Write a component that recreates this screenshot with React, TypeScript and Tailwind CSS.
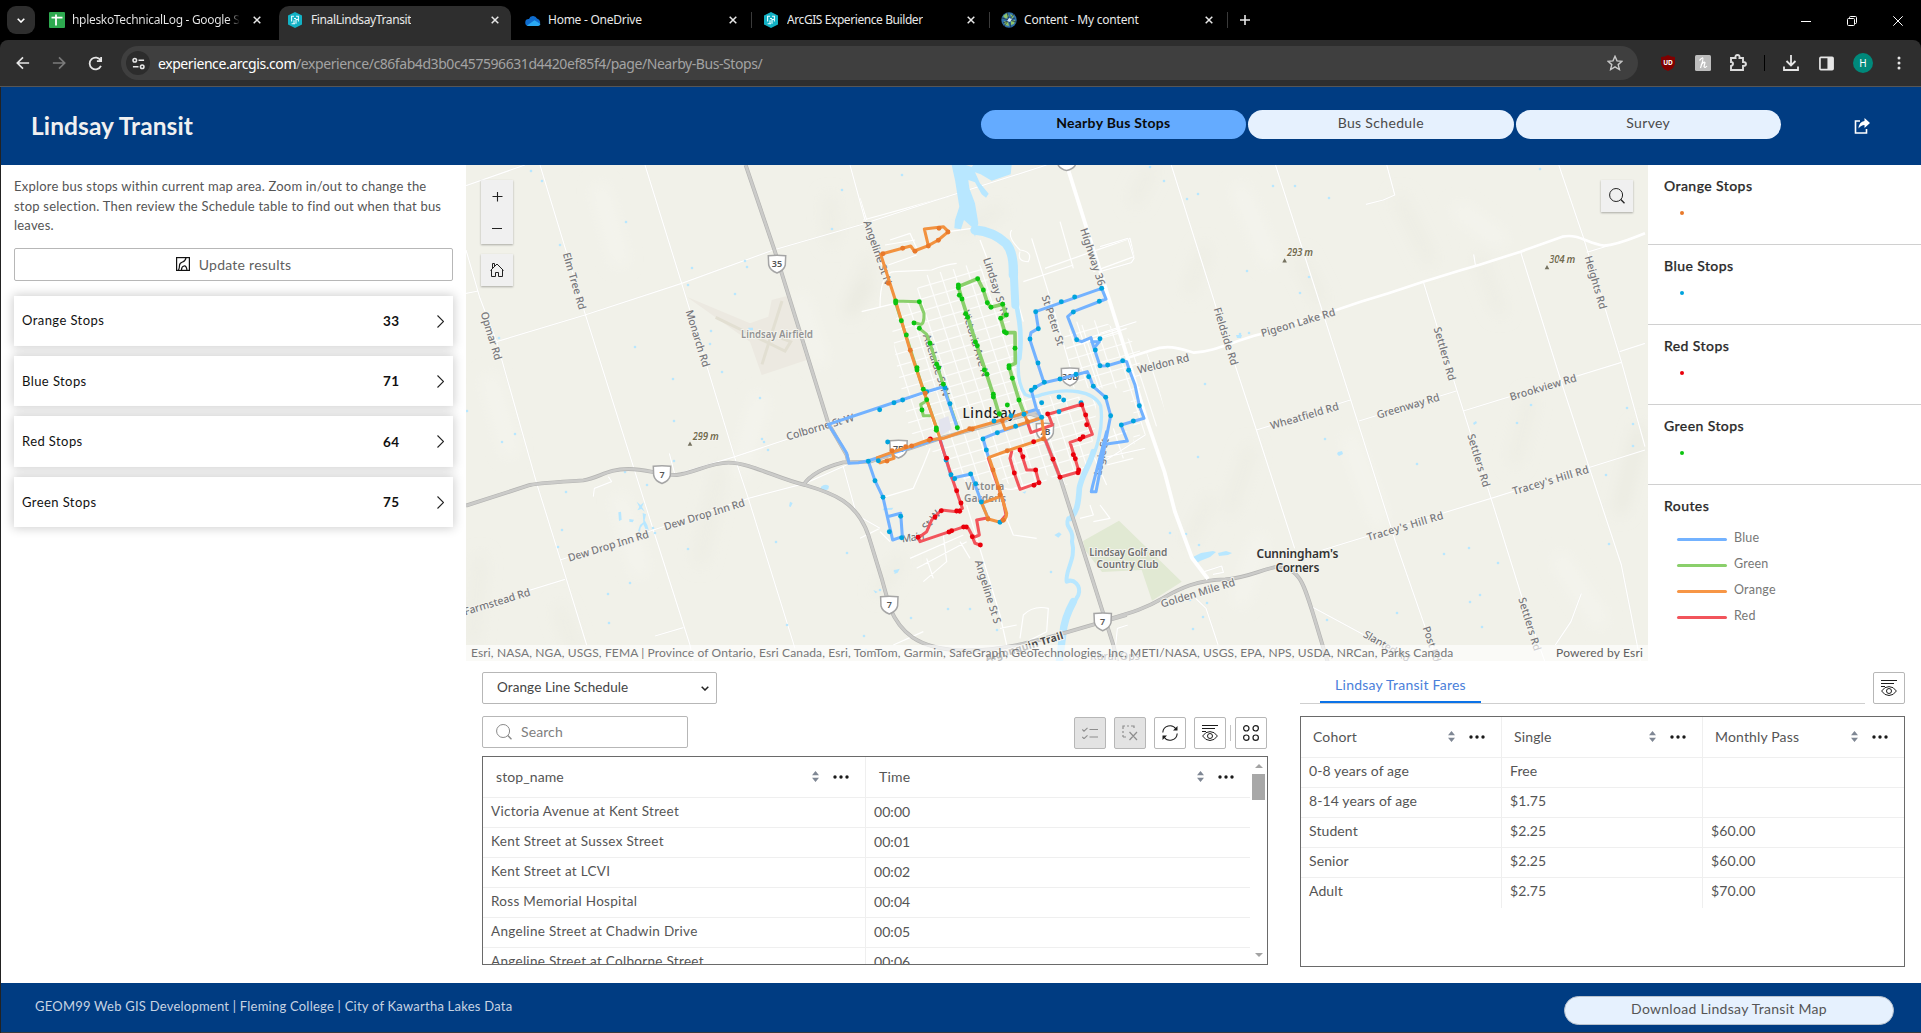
import React from "react";

/* ---------- map data ---------- */

type Label = { t: string; x: number; y: number; r?: number; l: number; s?: number; w?: number; c?: string; i?: boolean };

const ROAD_LABELS: Label[] = [
  { t: "Elm Tree Rd", x: 574.7, y: 281, r: 74, l: 59 },
  { t: "Opmar Rd", x: 491.5, y: 335.7, r: 73, l: 50 },
  { t: "Monarch Rd", x: 698, y: 338.3, r: 73, l: 59 },
  { t: "Colborne St W", x: 820, y: 426.7, r: -16.5, l: 70 },
  { t: "Dew Drop Inn Rd", x: 704.3, y: 514.3, r: -17, l: 84 },
  { t: "Dew Drop Inn Rd", x: 608.3, y: 545.7, r: -17, l: 84 },
  { t: "Farmstead Rd", x: 497, y: 601.5, r: -17, l: 69 },
  { t: "Fieldside Rd", x: 1226.2, y: 336.3, r: 73, l: 60 },
  { t: "Pigeon Lake Rd", x: 1298, y: 322.3, r: -16.5, l: 77 },
  { t: "Weldon Rd", x: 1163.3, y: 363.5, r: -14, l: 53 },
  { t: "Wheatfield Rd", x: 1304.4, y: 415.7, r: -16.5, l: 71 },
  { t: "Greenway Rd", x: 1408, y: 405.7, r: -16.5, l: 65 },
  { t: "Settlers Rd", x: 1445, y: 353.7, r: 74, l: 55 },
  { t: "Settlers Rd", x: 1479, y: 460.3, r: 73, l: 55 },
  { t: "Settlers Rd", x: 1530, y: 624, r: 73, l: 55 },
  { t: "Brookview Rd", x: 1543, y: 387, r: -16.5, l: 69 },
  { t: "Tracey's Hill Rd", x: 1405, y: 526, r: -16.5, l: 79 },
  { t: "Tracey's Hill Rd", x: 1550.5, y: 480, r: -16.5, l: 79 },
  { t: "Heights Rd", x: 1596, y: 282.3, r: 74, l: 55 },
  { t: "Golden Mile Rd", x: 1197.7, y: 592.7, r: -17, l: 77 },
  { t: "Slanted Rd", x: 1387, y: 646, r: 30, l: 52 },
  { t: "Post Rd", x: 1432, y: 644, r: 72, l: 37 },
  { t: "Angeline St N", x: 878, y: 252.3, r: 71, l: 67 },
  { t: "Highway 36", x: 1093, y: 256.7, r: 72, l: 60 },
  { t: "Lindsay St N", x: 996.3, y: 286.7, r: 72, l: 61 },
  { t: "St Peter St", x: 1053.3, y: 320.3, r: 72, l: 52 },
  { t: "Victoria Ave N", x: 976, y: 343.3, r: 73, l: 69 },
  { t: "Adelaide St N", x: 936.7, y: 365, r: 72, l: 65 },
  { t: "Angeline St S", x: 988.3, y: 591.7, r: 73, l: 66 },
  { t: "Main", x: 913, y: 537, r: -8, l: 23 },
  { t: "St W", x: 931, y: 520, r: -50, l: 22 },
  { t: "Logie St", x: 1101, y: 456.7, r: -78, l: 38 },
  { t: "Rural Ops", x: 1115, y: 656, l: 50 },
];

const PLACE_LABELS: Label[] = [
  { t: "Lindsay Airfield", x: 777, y: 334.3, l: 72, c: "#939393", w: 600, s: 9.8 },
  { t: "299 m", x: 705.7, y: 436.3, l: 26, c: "#726b4e", i: true, w: 600, s: 9.8 },
  { t: "293 m", x: 1300, y: 252.7, l: 26, c: "#726b4e", i: true, w: 600, s: 9.8 },
  { t: "304 m", x: 1562.3, y: 259.7, l: 26, c: "#726b4e", i: true, w: 600, s: 9.8 },
  { t: "Cunningham's", x: 1297.4, y: 553.7, l: 82, c: "#333333", w: 600, s: 12 },
  { t: "Corners", x: 1297.4, y: 567, l: 44, c: "#333333", w: 600, s: 12 },
  { t: "Lindsay", x: 989, y: 412.6, l: 53, c: "#222222", w: 500, s: 13.5 },
  { t: "Victoria", x: 984.7, y: 486, l: 39, c: "#8a8a8a", w: 600, s: 10.3 },
  { t: "Gardens", x: 985, y: 497.5, l: 42, c: "#8a8a8a", w: 600, s: 10.3 },
  { t: "Lindsay Golf and", x: 1128.3, y: 552, l: 78, c: "#707070", w: 600, s: 10 },
  { t: "Country Club", x: 1127.5, y: 563.7, l: 62, c: "#707070", w: 600, s: 10 },
  { t: "Algonquin Trail", x: 1024, y: 646.7, r: -17, l: 81, c: "#4a4a4a", w: 700, s: 10.5 },
];

const SHIELDS: [string, number, number][] = [
  ["35", 777, 264],
  ["7", 662, 474.5],
  ["7B", 898.5, 449],
  ["36B", 1070, 376.7],
  ["7B", 1045, 432],
  ["7", 889.3, 605],
  ["7", 1102.7, 621.7],
];

const WEST_ROADS =
  "M240 0L375 445L580 1095L690 1440L700 1490M18 255L60 400L110 530L230 955L300 1180L380 1440M555 0L665 355L825 880L865 1000L1005 1450M18 62L195 0M18 385L55 378M110 530L375 450L665 355L940 255L1200 180L1430 105L1760 0M1170 0L1215 165L1265 300M640 930L825 875L1110 780M300 1185L580 1095L865 1000L1035 955L1160 900M18 1335L315 1243M400 995L403 970L455 950L445 935M628 865L645 930M585 1413L670 1388M1150 905L1190 1050L1260 1090";
const EAST_ROADS =
  "M205 0L335 430L450 795L560 1150M505 0L720 700L850 1130L935 1385L970 1490M930 350L1025 670L1125 1000L1215 1300L1280 1490M1210 260L1330 660L1405 900L1500 1200L1555 1490M1320 0L1390 215L1500 590L1568 845M450 795L720 705M745 768L1025 678M1045 738L1500 592M1495 560L1568 535M640 1155L1125 1000L1568 855M825 0L848 90L815 105L765 118M600 1320L760 1410L850 1460M1385 1285L1355 1370L1310 1440M1400 262L1470 240M265 1290L305 1330L340 1440M0 245L80 220L98 280L90 293L0 320M0 505L105 470M0 880L130 850M10 890L130 810M300 1220L350 1203L355 1222L325 1228M1075 268L1080 300M45 1440L50 1390L80 1380";
const TOWN_STREETS =
  "M10 165L265 95M0 100L20 165M90 225L150 205L170 250M75 240L165 225M85 300L170 270M265 200L335 190M360 225L385 290M60 425Q60 320 105 320L215 315Q250 300 290 295M5 440L105 415M455 195Q440 215 480 255Q520 260 505 290Q470 290 480 260M515 220L580 430L640 640M555 310L810 220L822 275L700 320M600 170L640 310M490 350L640 300M620 550L800 490M650 470L720 680M680 520L780 490M60 1000L160 970L190 900L210 850M90 1130L60 1100M420 960Q440 980 470 970L560 945M320 1020L420 1350L440 1440M0 1120L60 1090M190 1250L260 1190L250 1110M150 1180L310 1110M170 1210L320 1130M220 1240L200 1180M440 1060L460 1110L530 1120M420 1390L470 1380M480 1420L490 1350Q520 1320 565 1330L560 1400L500 1430M690 1020L700 1050L660 1060M720 1020L750 1060L700 1070M100 1440L190 1400M710 830L800 800M740 900L820 880M760 790L790 880M700 870L740 960M300 1130L330 1180M470 400L490 470";

const townGrid = (() => {
  let d = "";
  for (let i = 0; i < 19; i++) {
    const x = -60 + i * 42;
    d += `M${x} 300L${x + 225} 1000`;
  }
  for (let j = 0; j < 24; j++) {
    const y = 420 + j * 36;
    d += `M0 ${y}L760 ${y - 222}`;
  }
  return d;
})();

const BLUE =
  "M250 665L200 680L125 705L-95 778L-55 840L-40 865L-33 895L-5 893L25 887L240 820M25 889L45 947L69 997L82 1055L122 1045L127 1115L98 1125L82 1055M250 665L293 792M240 822L275 940L333 927L364 1010L385 1062M385 875L379 855L369 820L412 803L545 760M530 735L515 680L525 667L552 653L509 522L513 503L535 490L527 440L725 370L738 402L640 440L623 455L650 525L665 530L693 518L697 533L720 603L742 602L790 588L800 590L808 615L825 660L838 722L852 760L783 780L802 828L735 838M695 530L718 530L706 545M552 653L600 642L682 620L690 638L700 665L737 697L752 752L735 838L708 980L694 980L698 962L740 800M425 765L530 733L545 760";
const GREEN_THIN =
  "M105 408L178 410L192 445Q193 480 180 478L160 472M178 490L200 508L210 535L250 660L268 715L293 788M105 408L190 675L232 795M200 708L182 718L190 752L210 752";
const GREEN =
  "M418 750L400 690L380 628L350 540L305 400L295 365L353 341L370 375L382 413L393 427L428 418L438 450L422 460L435 503L465 503L466 595L447 603L457 640L477 705L492 745";
const RED =
  "M240 825L275 935L307 1030L290 1040L244 1035L215 1065L200 1100L175 1118L180 1130L313 1085L325 1090L340 1118L358 1110L350 1065L385 1058M337 1115L345 1135L360 1140M455 860L450 880L462 922L480 973L537 953L527 915L500 915L480 853M500 765L513 803L577 780L565 748L665 718L683 770L697 808L665 820L630 832L642 870L657 920L600 937L555 822M385 880L430 1010L438 1050L420 1072";
const ORANGE =
  "M265 200L250 185L193 192L205 242L235 225L265 200M205 242L163 258L152 243L62 268L106 405L150 555L190 675L240 820M52 878L95 862L155 843L205 825L250 820L330 792L425 765L500 742M492 748L503 770M425 765L435 793L545 758L553 820L440 858L387 877L400 915L417 968L428 1005L440 1045Q440 1065 420 1072L385 1062L365 1015L420 995M52 878L60 893L102 880L97 862";

const STOPS: [string, string][] = [
  ["#00a3dd", "200,680 128,705 102,713 59,734 255,668 270,716 25,889 45,947 69,997 88,1100 122,1054 125,1118 258,885 273,929 284,941 332,927 347,956 364,1011 83,831 55,887 402,768 412,803 453,752 492,748 467,784 369,822 379,855 545,757 545,713 597,740 597,696 611,705 663,713 514,676 525,667 553,652 600,642 648,628 686,635 700,664 737,697 752,752 510,522 535,491 527,440 604,410 644,396 725,370 718,409 640,441 650,524 720,521 706,555 720,602 743,600 788,587 806,616 838,722 820,768 784,780 534,594 420,1072"],
  ["#0bc40f", "107,408 107,414 178,410 162,474 178,490 124,467 139,510 210,535 171,608 171,615 230,598 236,608 190,673 200,704 186,735 250,658 229,789 229,796 292,788 295,360 295,368 298,391 306,402 353,341 370,375 382,413 393,427 428,418 439,450 422,460 433,500 439,504 465,550 447,602 447,609 457,640 477,705 442,720 317,446 323,457 346,531 352,542 373,615 381,628 400,688 400,696 418,746"],
  ["#e9000b", "211,822 260,880 290,977 303,1014 290,1038 299,1039 244,1037 225,1056 174,1117 267,1101 275,1097 311,1086 319,1086 337,1115 361,1140 480,855 489,875 463,924 527,915 537,953 522,961 521,830 563,747 665,719 677,750 680,779 660,823 669,815 640,869 646,881 656,915 654,923 600,937 579,883"],
  ["#e8792b", "264,201 237,190 235,226 205,243 165,259 128,250 69,266 85,355 151,556 196,685 208,826 155,843 137,845 96,857 81,888 329,791 337,792 427,767 442,857 550,821 503,770 399,915 416,968 420,989 384,1062 430,1066"],
];

const PONDS =
  "467,411 502,442 515,434 499,338 531,171 542,181 560,245 626,222 692,268 688,285 711,331 710,344 722,372 735,294 745,261 747,267 842,190 832,229 673,379 674,421 635,347 625,472 647,485 566,492 760,398 768,450 762,439 764,442 674,461 630,583 608,594 558,547 562,530 688,549 776,542 847,553 787,625 609,623 866,650 655,533 653,528 1187,199 1164,181 1198,194 1240,334 1247,271 1273,186 1295,186 1300,293 1309,277 1329,198 1205,384 1249,333 1198,457 1325,439 1417,464 1517,423 1531,405 1627,408 1633,424 1633,446 1606,475 1609,544 1469,548 1444,554 1498,563 1480,595 1470,602 1482,627 1397,613 1327,620 1170,533 1186,534 1199,545 1207,603 1193,629 1540,169 1150,167 1190,600 1203,617 895,571 880,590 911,618 948,609 970,609 864,636 902,175 997,630 1051,572";

const Dots = ({ color, pts, r }: { color: string; pts: string; r: number }) => (
  <g fill={color}>
    {pts.split(" ").map((p, i) => {
      const [x, y] = p.split(",").map(Number);
      return <circle key={i} cx={x} cy={y} r={r} />;
    })}
  </g>
);

const MapLabel = ({ t, x, y, r = 0, l, s = 10.6, w = 500, c = "#77777b", i }: Label) => (
  <text
    x={x}
    y={y}
    transform={`rotate(${r} ${x} ${y})`}
    textAnchor="middle"
    dominantBaseline="central"
    textLength={l}
    fontSize={s}
    fontWeight={w}
    fontStyle={i ? "italic" : "normal"}
    fill={c}
    stroke="#f4f4ee"
    strokeWidth={2}
    strokeLinejoin="round"
    paintOrder="stroke"
  >
    {t}
  </text>
);

function CityMap() {
  return (
    <svg
      viewBox="466 165 1182 496"
      className="block h-[496px] w-[1182px] bg-[#f1f1e9]"
      fontFamily='"Noto Sans", sans-serif'
    >
      <defs>
        <filter id="soft" x="-50%" y="-50%" width="200%" height="200%">
          <feGaussianBlur stdDeviation="8" />
        </filter>
        <clipPath id="town">
          <path d="M95 480L200 330L290 310L355 290L455 480L475 640L500 700L600 690L710 700L705 800L680 900L620 960L560 930L480 980L420 940L330 960L240 880L150 800L110 600Z" />
        </clipPath>
        <clipPath id="east">
          <path d="M530 500L640 460L780 560L810 640L840 760L740 840L740 720L700 670L560 670Z" />
        </clipPath>
      </defs>

      {/* terrain shading */}
      <g filter="url(#soft)" fill="none" strokeLinecap="round">
        <g stroke="#ecece3" strokeWidth="11">
          <path d="M870 260L850 310M830 200L832 240M1150 170L1135 200M1205 250L1190 290M1480 260L1500 310M1530 400L1515 460M1250 450L1230 510M1210 500L1190 540M720 470L700 560M480 560L472 640M560 610L575 650M900 560L880 590M1000 210L960 230M1320 300L1300 260M1400 200L1430 260" />
        </g>
        <g stroke="#e7e7dd" strokeWidth="9">
          <path d="M1640 430L1620 510M868 285L850 312" />
        </g>
        <g stroke="#f5f5ef" strokeWidth="12">
          <path d="M600 190L620 260M760 400L740 470M490 380L510 450M1240 190L1270 260M1460 210L1500 240M1350 440L1380 520M1560 560L1600 620M1260 540L1240 600M800 300L820 360M620 500L640 570" />
        </g>
      </g>

      <g transform="translate(460 165) scale(.33333)">
        <path d="M680 395L870 475L925 455L935 405L980 393L1040 585L905 630L870 530Z" fill="#ece9e1" />
        <path d="M767 457L975 558L992 530L965 520M966 408L906 598" fill="none" stroke="#e2dfd2" strokeWidth="9" />
        <g fill="#b8e7ff">
          <path d="M530 1010l12 10 10-8-6 14 8 14-10-8-12 4 6-10zM475 1042l8-2 2 24-8 4zM548 1044l10 4-4 18 8 14 4 14-8 2-8-18-8 10-2 14-6-4 6-18 10-8z" />
          <path d="M508 1062l14 2-4 8-10-2zM1083 965q12-10 24-2l-2 10q-14 6-24 0zM990 1010l8 4-6 12-5-2zM865 488h14v8h-14z" />
        </g>
      </g>
      <path d="M1083 541L1119 520.7L1181.7 581.7L1152 600.7L1141.7 570L1102 572L1085 550Z" fill="#e1e9d3" />

      {/* local streets */}
      <g fill="none" stroke="#ffffff" strokeLinejoin="round">
        <g transform="translate(860 165) scale(.33333)" strokeWidth="3.6">
          <path d={TOWN_STREETS} />
          <path d={townGrid} clipPath="url(#town)" opacity=".85" />
          <path d={townGrid} transform="translate(80 0)" clipPath="url(#east)" opacity=".85" />
          <path d="M235 765l30-12 10 40-35 20z" fill="#e3e4ee" stroke="none" />
        </g>
        <g transform="translate(460 165) scale(.33333)">
          <path d={WEST_ROADS} strokeWidth="5" stroke="#ebebe4" />
          <path d={WEST_ROADS} strokeWidth="3.6" />
        </g>
        <g transform="translate(1100 165) scale(.34758 .33333)">
          <path d={EAST_ROADS} strokeWidth="5" stroke="#ebebe4" />
          <path d={EAST_ROADS} strokeWidth="3.6" />
        </g>
      </g>

      {/* water */}
      <g transform="translate(860 165) scale(.33333)" fill="#b8e7ff">
        <path d="M275 0L285 45L298 125L285 165L283 190L303 193L312 165L335 185L345 215L355 175L345 115L328 70L325 45L345 52L365 88L378 98L386 86L360 55L345 22L362 28L395 47L452 28L455 0L340 0L335 6L318 0Z" />
        <g fill="none" stroke="#b8e7ff" strokeLinecap="round" strokeLinejoin="round">
          <path d="M345 195Q400 200 438 235Q462 262 460 330" strokeWidth="28" />
          <path d="M460 300L466 420" strokeWidth="24" />
          <path d="M466 400L478 470C485 520 482 550 478 580" strokeWidth="14" />
          <path d="M478 560C470 620 475 660 495 688Q520 702 548 688C620 668 700 676 722 722C732 790 708 860 690 890" strokeWidth="10" />
          <path d="M700 860C690 900 665 930 658 970C655 1020 650 1040 632 1060" strokeWidth="17" />
          <path d="M625 1060C612 1090 645 1090 636 1130C650 1180 615 1215 620 1250C640 1240 665 1260 655 1290Q610 1370 612 1410" strokeWidth="12" />
          <path d="M640 1310Q612 1360 608 1410L598 1490" strokeWidth="22" />
        </g>
        <path d="M583 1110l14-8 8 6-10 10zM105 1215l14-4-6 12-10 4zM40 1275l14 6-8 4zM70 1030l30-2-4 6-28 2zM487 982l12-4-4 8z" />
      </g>
      <path d="M1193 557l8-4 12-2 3 1-6 5-10 4-3 2zM1218 553l8-2 6 2-4 2-9 1zM1236 335l6 0-1 3-4 0z" fill="#b8e7ff" />
      <Dots color="#b8e7ff" pts={PONDS} r={1.3} />
      <path d="M1338 452l4-1 1 3-4 2-2-2zM1473 423l3-2 1 2-3 2z" fill="#b8e7ff" />

      {/* highways */}
      <g fill="none" strokeLinecap="butt">
        {[
          ["#b4b4b2", 3.9],
          ["#cbcbc9", 2.6],
        ].map(([c, w]) => (
          <g key={c} stroke={c as string}>
            <g transform="translate(460 165) scale(.33333)" strokeWidth={(w as number) * 3}>
              <path d="M857 0L945 260L1105 775L1160 870L1165 892M18 1022L210 960Q235 954 370 946C420 938 440 912 505 912C560 912 600 930 650 930C700 925 750 893 805 893C870 893 950 940 1035 960C1120 985 1190 1010 1225 1110L1265 1240L1290 1330C1320 1400 1370 1450 1500 1456" />
              <path d="M1030 960Q1060 915 1150 892L1230 890L1440 820M1440 820L1740 738" />
              <path d="M1500 1456C1640 1460 1760 1420 1930 1370L2000 1350" />
            </g>
            <g transform="translate(860 165) scale(.33333)" strokeWidth={(w as number) * 3}>
              <path d="M555 822L600 937L760 1440L772 1490M500 742L545 758" />
            </g>
            <g transform="translate(1100 165) scale(.34758 .33333)" strokeWidth={(w as number) * 2.9}>
              <path d="M20 1364C100 1340 130 1330 180 1300C230 1270 280 1245 360 1243C420 1240 460 1215 510 1205C590 1215 585 1260 655 1490" />
            </g>
          </g>
        ))}
      </g>
      <g fill="none" stroke="#ffffff">
        <path d="M1066.7 165L1128.3 360L1146 418L1164.5 472L1175 512L1192 558L1208 579" strokeWidth="3.8" />
        <g transform="translate(1100 165) scale(.34758 .33333)" strokeWidth="8">
          <path d="M75 580L150 555C200 535 240 555 270 563C330 560 380 530 460 508L680 435L750 410L830 385L930 350L1040 315L1090 300L1210 260L1330 215C1380 205 1400 235 1450 242C1490 240 1530 220 1568 205" />
        </g>
      </g>

      {ROAD_LABELS.map((l, i) => (
        <MapLabel key={i} {...l} />
      ))}
      {PLACE_LABELS.map((l, i) => (
        <MapLabel key={i} {...l} />
      ))}
      <path d="M690 441.5l2.3 4.2h-4.6zM1284.6 258.3l2.3 4.2h-4.6zM1547 265l2.3 4.2h-4.6z" fill="#75715f" />

      <path d="M1058 165Q1061 169.500 1066.700 170.500Q1072.500 169.500 1075.500 165" fill="#fff" stroke="#a5a5a5" strokeWidth="1.5" />
      {SHIELDS.map(([t, x, y], i) => (
        <g key={i} transform={`translate(${x} ${y})`}>
          <path d="M-8.7 -8.3Q0 -9 8.7 -8.3L8.3 1Q7 6.5 0 9Q-7 6.5 -8.3 1Z" fill="#fff" stroke="#a5a5a5" strokeWidth="1.5" />
          <text textAnchor="middle" y="3.4" fontSize="9" fontWeight="600" fill="#555">
            {t}
          </text>
        </g>
      ))}

      {/* bus routes and stops */}
      <g transform="translate(860 165) scale(.33333)">
        <g fill="none" strokeLinejoin="round" strokeLinecap="round" strokeWidth="9.2">
          <path d={GREEN_THIN} stroke="#8acf6b" />
          <path d={GREEN} stroke="#8acf6b" strokeWidth="11" />
          <path d={BLUE} stroke="#73b2ff" />
          <path d={RED} stroke="#f2545b" />
          <path d={ORANGE} stroke="#f2923f" />
        </g>
        {STOPS.map(([c, p]) => (
          <Dots key={c} color={c} pts={p} r={7.4} />
        ))}
      </g>
    </svg>
  );
}

/* ---------- small icons ---------- */

const Close = () => (
  <svg viewBox="0 0 8 8" className="size-2 shrink-0" stroke="#e8e8e8" strokeWidth="1.5">
    <path d="M.7.7l6.6 6.6M7.3.7L.7 7.3" />
  </svg>
);

const HexIcon = () => (
  <svg viewBox="0 0 14 16" className="h-4 w-3.5 shrink-0">
    <path d="M7 0l7 3.6v8.8L7 16l-7-3.6V3.6z" fill="#12b1c4" />
    <path d="M6 4.2H3.6v5.4M3.6 11.8H6V8.2M8 4.2h2.4v5.4M8 11.8V7.5h2.4M6 6.5h2M6 11.8h1" fill="none" stroke="#e6fbff" strokeWidth="1.1" />
  </svg>
);

const SheetsIcon = () => (
  <svg viewBox="0 0 16 16" className="size-4 shrink-0">
    <rect width="16" height="16" rx="1" fill="#2da94f" />
    <path d="M7 2.5v11M2.5 5.7h11" stroke="#fff" strokeWidth="1.8" />
  </svg>
);

const CloudIcon = () => (
  <svg viewBox="0 0 16 11" className="h-[11px] w-4 shrink-0">
    <path d="M4 4a4.3 4.3 0 0 1 8-.5A4 4 0 0 1 13 11H3.500A3.500 3.500 0 0 1 4 4z" fill="#0f6cce" />
    <path d="M2 10.400L9.500 5.200 15.500 9A3 3 0 0 1 13 11H3.500a3 3 0 0 1-1.500-.6z" fill="#2aa8f2" />
  </svg>
);

const GlobeIcon = () => (
  <svg viewBox="0 0 16 16" className="size-4 shrink-0">
    <circle cx="8" cy="8" r="7.700" fill="#2f6fa8" />
    <path d="M2 4l4-3 2 3-3 3zM9 2l4 2-2 3zM3 9l4 1 1 4-4-1zM10 9l4-1-1 4-3 1z" fill="#8fc46a" />
    <path d="M1 6l14 4M6 .5l4 15M13 2L3 14M2 11L14 6" stroke="#1d2a33" strokeWidth=".7" fill="none" />
    <path d="M8 6l3 1-2 3-3-1z" fill="#cfe7f7" />
  </svg>
);

const SearchIcon = ({ className }: { className: string }) => (
  <svg viewBox="0 0 16 16" className={className} fill="none" stroke="currentColor">
    <circle cx="7.100" cy="7" r="6.500" />
    <path d="M11.800 11.500l3.700 3.800" strokeWidth="1.300" />
  </svg>
);

const EyeList = ({ className }: { className: string }) => (
  <svg viewBox="0 0 16 16" className={className} fill="none" stroke="#1c1c1c">
    <path d="M0 .5h16M0 3.500h13M0 6.500h4" />
    <path d="M.6 11Q3.500 6.600 8 6.600T15.400 11Q12.500 15.500 8 15.500T.6 11z" />
    <circle cx="8" cy="11" r="2.500" />
  </svg>
);

const HeaderIcons = () => (
  <div className="ml-auto flex items-center gap-[14px]">
    <svg viewBox="0 0 7 11" className="h-[11px] w-[7px]" fill="#7f8794">
      <path d="M3.500 0L7 4.300H0zM3.500 11L7 6.700H0z" />
    </svg>
    <svg viewBox="0 0 16 4" className="mt-0.5 h-1 w-4" fill="#1a1a1a">
      <circle cx="2" cy="2" r="1.700" />
      <circle cx="8" cy="2" r="1.700" />
      <circle cx="14" cy="2" r="1.700" />
    </svg>
  </div>
);

/* ---------- browser frame ---------- */

const Tab = ({ icon, title, width, titleClass }: { icon: React.ReactNode; title: string; width: string; titleClass: string }) => (
  <div className={`flex h-7 shrink-0 items-center ${width}`}>
    <div className="flex w-6 shrink-0 items-center">{icon}</div>
    <span className={`-ml-px overflow-hidden whitespace-nowrap ${titleClass}`}>{title}</span>
    <div className="ml-auto">
      <Close />
    </div>
  </div>
);

function BrowserChrome() {
  return (
    <div className="font-['Noto_Sans',sans-serif]">
      <div className="flex h-10 bg-black pt-[6px] text-[12px] text-[#e9e9e9]">
        <div className="ml-[7px] flex h-7 w-7 shrink-0 items-center justify-center rounded-[9px] bg-[#2e2e2e]">
          <svg viewBox="0 0 8 5" className="h-[5px] w-2" fill="none" stroke="#fff" strokeWidth="1.600">
            <path d="M.7.7L4 4 7.300.7" />
          </svg>
        </div>
        <div className="w-[14px] shrink-0" />
        <Tab icon={<SheetsIcon />} title="hpleskoTechnicalLog - Google Sheets" width="mr-[18px] w-[212px]" titleClass="w-[168px] tracking-[-0.32px] bg-gradient-to-r from-[#e9e9e9] from-93% to-transparent bg-clip-text text-transparent" />
        <div className="flex h-[34px] w-[232px] shrink-0 items-start rounded-t-[10px] bg-[#2e2e2e] pr-3 pl-[9px]">
          <Tab icon={<HexIcon />} title="FinalLindsayTransit" width="w-full" titleClass="tracking-[-0.38px]" />
        </div>
        <Tab icon={<CloudIcon />} title="Home - OneDrive" width="ml-[14px] w-[212px]" titleClass="tracking-[-0.25px]" />
        <div className="mt-[6px] ml-[14px] h-4 w-px bg-[#3a3a3a]" />
        <Tab icon={<HexIcon />} title="ArcGIS Experience Builder" width="ml-3 w-[211px]" titleClass="tracking-[-0.42px]" />
        <div className="mt-[6px] ml-[14px] h-4 w-px bg-[#3a3a3a]" />
        <Tab icon={<GlobeIcon />} title="Content - My content" width="ml-[11px] w-[212px]" titleClass="tracking-[-0.2px]" />
        <div className="mt-[6px] ml-[14px] h-4 w-px bg-[#3a3a3a]" />
        <svg viewBox="0 0 10 10" className="mt-[9px] ml-3 size-[10px]" stroke="#e8e8e8" strokeWidth="1.600">
          <path d="M5 0v10M0 5h10" />
        </svg>
        <div className="mt-[9px] mr-[18px] ml-auto flex h-[11px] items-center gap-[36px]">
          <svg viewBox="0 0 10 10" className="size-[10px]" stroke="#fff">
            <path d="M0 5.500h10" />
          </svg>
          <svg viewBox="0 0 10 10" className="size-[10px]" stroke="#fff" fill="none">
            <rect x=".5" y="2.500" width="7" height="7" rx="1" />
            <path d="M2.500 2.500V1.500q0-1 1-1h5q1 0 1 1v5q0 1-1 1h-1" />
          </svg>
          <svg viewBox="0 0 10 10" className="size-[10px]" stroke="#fff">
            <path d="M.3.3l9.400 9.400M9.700.3L.3 9.700" />
          </svg>
        </div>
      </div>

      <div className="flex h-[46px] items-center rounded-t-lg bg-[#2e2e2e] shadow-[0_-8px_0_0_#000]">
        <svg viewBox="0 0 16 16" className="ml-4 size-[14px]" fill="none" stroke="#e6e6e6" strokeWidth="1.900">
          <path d="M15 8H2M8 1.500L1.500 8 8 14.500" />
        </svg>
        <svg viewBox="0 0 16 16" className="ml-[22px] size-[14px]" fill="none" stroke="#7b7b7b" strokeWidth="1.900">
          <path d="M1 8h13M8 1.500L14.500 8 8 14.500" />
        </svg>
        <svg viewBox="0 0 16 16" className="ml-[22px] size-[15px]" fill="none" stroke="#e6e6e6" strokeWidth="1.900">
          <path d="M13.800 10.500A6.300 6.300 0 1 1 13.500 4.800M14 1v4.500H9.500" />
        </svg>
        <div className="ml-[18px] flex h-[34px] w-[1517px] items-center rounded-full bg-[#3f3f3f] pl-[5px] text-[14px]">
          <div className="flex size-6 shrink-0 items-center justify-center rounded-full bg-[#2c2c2c]">
            <svg viewBox="0 0 14 14" className="size-[13px]" fill="none" stroke="#e6e6e6" strokeWidth="1.700">
              <circle cx="3" cy="3.500" r="1.900" />
              <path d="M7 3.500h6M1 10.500h6" />
              <circle cx="11" cy="10.500" r="1.900" />
            </svg>
          </div>
          <span className="ml-2 text-white tracking-[-0.42px]">experience.arcgis.com</span>
          <span className="text-[#a3a3a3] tracking-[-0.43px]">/experience/c86fab4d3b0c457596631d4420ef85f4/page/Nearby-Bus-Stops/</span>
          <svg viewBox="0 0 16 16" className="mr-[15px] ml-auto size-4" fill="none" stroke="#c9c9c9" strokeWidth="1.400">
            <path d="M8 1.300l2 4.600 5 .4-3.800 3.300 1.200 4.900L8 11.900l-4.400 2.600 1.200-4.900L1 6.300l5-.4z" />
          </svg>
        </div>
        <div className="ml-auto flex items-center pr-[20px]">
          <svg viewBox="0 0 16 16" className="size-4">
            <path d="M8 0q3 2 7 2v6q0 5-7 8Q1 13 1 8V2q4 0 7-2z" fill="#800000" />
            <text x="8" y="9.500" textAnchor="middle" fontSize="6.500" fontWeight="700" fill="#fff">
              UD
            </text>
          </svg>
          <svg viewBox="0 0 16 16" className="mr-px ml-[19px] size-4">
            <rect width="16" height="16" rx="1.500" fill="#bdbdbd" />
            <path d="M4.500 5.500Q7 2.500 7.800 3T5.500 13M6 10Q9 6 10 7.500L9 11.500q1 2 3-.5" fill="none" stroke="#fff" strokeWidth="1.200" />
          </svg>
          <svg viewBox="0 0 18 18" className="ml-[17px] size-[18px]" fill="none" stroke="#dcdcdc" strokeWidth="1.900">
            <path d="M2 4h4.500q-.5-3 2-3t2 3H14v4q3 0 3 2t-3 2v4H2v-4q2-.4 2-2.200T2 8z" />
          </svg>
          <div className="ml-[17px] h-4 w-[1.5px] bg-black" />
          <svg viewBox="0 0 16 16" className="ml-[18px] size-4" fill="none" stroke="#e6e6e6" strokeWidth="1.800">
            <path d="M8 0v10M3.500 6L8 10.500 12.500 6M1 11.500V15h14v-3.500" />
          </svg>
          <svg viewBox="0 0 16 16" className="ml-[20px] size-[15px]">
            <rect x="1" y="1.500" width="14" height="13" rx="1" fill="none" stroke="#e6e6e6" strokeWidth="1.800" />
            <path d="M9 2h6v12H9z" fill="#e6e6e6" />
          </svg>
          <div className="ml-[19px] flex size-5 items-center justify-center rounded-full bg-[#00897b] text-[10px] text-white">H</div>
          <svg viewBox="0 0 4 14" className="ml-[24px] h-[14px] w-1" fill="#e6e6e6">
            <circle cx="2" cy="2" r="1.500" />
            <circle cx="2" cy="7" r="1.500" />
            <circle cx="2" cy="12" r="1.500" />
          </svg>
        </div>
      </div>
      <div className="h-px bg-[#565656]" />
    </div>
  );
}

/* ---------- application ---------- */

const NAV = [
  { name: "Nearby Bus Stops", style: "bg-[#64abff] font-bold text-[#0a0a0a] tracking-[0.28px]" },
  { name: "Bus Schedule", style: "bg-[#e6f1fe] text-[#4a4a4a] tracking-[0.34px]" },
  { name: "Survey", style: "bg-[#e6f1fe] text-[#4a4a4a] tracking-[0.34px]" },
];

function Header() {
  return (
    <header className="flex h-[78px] bg-[#003c82]">
      <h1 className="mt-[22.5px] ml-[30px] text-[24.5px] leading-8 font-bold text-[#f0f0f0] tracking-[0.09px]">Lindsay Transit</h1>
      <nav className="mt-[23px] mr-[73px] ml-auto flex gap-[2px] text-[14px]">
        {NAV.map((n) => (
          <button key={n.name} className={`flex h-[29px] w-[265.5px] justify-center rounded-full pt-[3px] leading-5 ${n.style}`}>
            {n.name}
          </button>
        ))}
      </nav>
      <svg viewBox="0 0 16 16" className="mt-[31px] mr-[51px] size-4" fill="none" stroke="#fff" strokeWidth="1.600">
        <path d="M6 3H1.500v12h11v-4" />
        <path d="M10.500 0l5.500 5-5.500 5V7Q7 7 4.500 10.500 5 3.800 10.500 3z" fill="#fff" stroke="none" />
      </svg>
    </header>
  );
}

const CARDS: [string, number][] = [
  ["Orange Stops", 33],
  ["Blue Stops", 71],
  ["Red Stops", 64],
  ["Green Stops", 75],
];

function StopPanel() {
  return (
    <aside className="w-[465px] shrink-0 bg-white pr-[13px] pl-[13px]">
      <p className="mt-3 text-[13px] leading-[19.5px] whitespace-nowrap text-[#555] tracking-[0.21px]">
        Explore bus stops within current map area. Zoom in/out to change the
        <br />
        stop selection. Then review the Schedule table to find out when that bus
        <br />
        leaves.
      </p>
      <button className="mt-[12.5px] flex h-[33px] w-[439px] items-center justify-center gap-[9px] rounded-[2px] border border-[#b7b7b7] pb-px text-[14px] text-[#606060] tracking-[0.25px]">
        <svg viewBox="0 0 14 14" className="size-[14px]" fill="none" stroke="#111" strokeWidth="1.200">
          <rect x=".6" y=".6" width="12.800" height="12.800" />
          <path d="M10 .6Q9.500 4 6.500 5T3.500 8.500 2.500 13M5.500 13q0-3.500 2.500-4t3 4.500" />
        </svg>
        Update results
      </button>
      <div className="mt-[14.5px] flex flex-col gap-[10px]">
        {CARDS.map(([name, n]) => (
          <div key={name} className="flex h-[50.4px] w-[439px] items-center bg-white pt-px pr-[9px] pl-2 text-[13px] text-[#111] shadow-[0_0_10px_1px_rgba(0,0,0,0.2)]">
            <span className="tracking-[0.42px]">{name}</span>
            <span className="ml-auto w-[45px] text-[13.5px] font-bold tracking-[0.3px]">{n}</span>
            <svg viewBox="0 0 7 13" className="ml-[9px] h-[13px] w-[7px]" fill="none" stroke="#222" strokeWidth="1.100">
              <path d="M.5.5l6 6-6 6" />
            </svg>
          </div>
        ))}
      </div>
    </aside>
  );
}

function MapPanel() {
  return (
    <section className="relative h-[496px] w-[1182px] overflow-hidden">
      <CityMap />
      <div className="absolute top-[15px] left-[15px] flex h-16 w-8 flex-col bg-[#f0f0f0] shadow-[0_1px_2px_rgba(0,0,0,0.3)]">
        <svg viewBox="0 0 32 64" stroke="#222" strokeWidth="1.100">
          <path d="M16.500 12v9.500M11.500 16.500h10M11 48.500h10" />
        </svg>
      </div>
      <div className="absolute top-[89px] left-[15px] flex size-8 items-center justify-center bg-[#f0f0f0] shadow-[0_1px_2px_rgba(0,0,0,0.3)]">
        <svg viewBox="0 0 14 14" className="size-[14px]" fill="none" stroke="#222">
          <path d="M.5 7.500L7 1l6.500 6.500M1.500 6.500v7h4V9.500h3v4h4v-7M2.500 5V.5h2V3" />
        </svg>
      </div>
      <div className="absolute top-[15px] left-[1135px] flex size-8 items-center justify-center bg-[#f0f0f0] text-[#222] shadow-[0_1px_2px_rgba(0,0,0,0.3)]">
        <SearchIcon className="size-4" />
      </div>
      <div className="absolute bottom-0 left-0 flex h-4 w-full items-center justify-between bg-white/65 pr-[5px] pl-[5px] text-[12px] whitespace-nowrap text-[#777]">
        <span className="tracking-[0.135px]">
          Esri, NASA, NGA, USGS, FEMA | Province of Ontario, Esri Canada, Esri, TomTom, Garmin, SafeGraph, GeoTechnologies, Inc, METI/NASA, USGS, EPA, NPS, USDA, NRCan, Parks Canada
        </span>
        <span className="text-[#606060] tracking-[0.17px]">Powered by Esri</span>
      </div>
    </section>
  );
}

const LEGEND = [
  { name: "Orange Stops", dot: "bg-[#e8792b]" },
  { name: "Blue Stops", dot: "bg-[#00a3dd]" },
  { name: "Red Stops", dot: "bg-[#e9000b]" },
  { name: "Green Stops", dot: "bg-[#0bc40f]" },
];
const ROUTES = [
  { name: "Blue", line: "bg-[#73b2ff]" },
  { name: "Green", line: "bg-[#8acf6b]" },
  { name: "Orange", line: "bg-[#f79646]" },
  { name: "Red", line: "bg-[#f2545b]" },
];

function Legend() {
  return (
    <aside className="w-[273px] shrink-0 text-[#2a2a2a]">
      {LEGEND.map((l) => (
        <div key={l.name} className="h-20 border-b border-[#d0d0d0] pt-[11px] pl-4">
          <div className="text-[14px] leading-5 font-medium tracking-[0.42px] [-webkit-text-stroke:0.25px]">{l.name}</div>
          <div className={`mt-[15px] ml-4 size-1 rounded-full ${l.dot}`} />
        </div>
      ))}
      <div className="pt-[11px] pl-4">
        <div className="text-[14px] leading-5 font-medium tracking-[0.42px] [-webkit-text-stroke:0.25px]">Routes</div>
        <div className="mt-[9px]">
          {ROUTES.map((r) => (
            <div key={r.name} className="flex h-[26.2px] items-center gap-[7px] pl-[13px]">
              <div className={`mt-[2px] h-[3px] w-[50px] rounded-full ${r.line}`} />
              <span className="text-[12.5px] text-[#777] tracking-[0.2px]">{r.name}</span>
            </div>
          ))}
        </div>
      </div>
    </aside>
  );
}

const SCHEDULE = [
  ["Victoria Avenue at Kent Street", "00:00"],
  ["Kent Street at Sussex Street", "00:01"],
  ["Kent Street at LCVI", "00:02"],
  ["Ross Memorial Hospital", "00:04"],
  ["Angeline Street at Chadwin Drive", "00:05"],
  ["Angeline Street at Colborne Street", "00:06"],
];

const ToolButton = ({ children, off }: { children: React.ReactNode; off?: boolean }) => (
  <button className={`flex size-8 items-center justify-center rounded-[2px] border border-[#b7b7b7] ${off ? "bg-[#e3e3e3]" : "bg-white"}`}>{children}</button>
);

function Schedule() {
  return (
    <section className="w-[786px] text-[14px] text-[#555]">
      <button className="flex h-8 w-[235px] items-center rounded-[2px] border border-[#b7b7b7] pr-[7px] pl-[14px] text-[13.5px] text-[#444]">
        <span className="-mt-px tracking-[0.1px]">Orange Line Schedule</span>
        <svg viewBox="0 0 8 5" className="ml-auto h-[5px] w-2" fill="none" stroke="#222" strokeWidth="1.500">
          <path d="M.7.7L4 4 7.300.7" />
        </svg>
      </button>
      <div className="mt-3 flex">
        <div className="flex h-8 w-[206px] items-center gap-[9px] rounded-[2px] border border-[#b7b7b7] pl-[13px] text-[#808080]">
          <SearchIcon className="size-4 text-[#888]" />
          <span className="-mt-[2px] tracking-[0.1px]">Search</span>
        </div>
        <div className="mt-px ml-auto flex items-center gap-2 pr-px">
          <ToolButton off>
            <svg viewBox="0 0 16 12" className="h-3 w-4" fill="none" stroke="#8e8e8e" strokeWidth="1.100">
              <path d="M.3 2.500l1.700 1.700L5.500.8M7.500 2.500H16M.3 10l1.700 1.700L5.500 8.300M7.500 10H16" />
            </svg>
          </ToolButton>
          <ToolButton off>
            <svg viewBox="0 0 16 16" className="size-4" fill="none" stroke="#8e8e8e" strokeWidth="1.200">
              <path d="M1 12v-2M1 8V6M1 4V1h2M5 1h2M9 1h3v2M1 12h3M7.500 7l7.500 8M15 7l-7.500 8" />
            </svg>
          </ToolButton>
          <ToolButton>
            <svg viewBox="0 0 16 16" className="size-4" fill="none" stroke="#1c1c1c" strokeWidth="1.100">
              <path d="M.8 7.500A7.200 7.200 0 0 1 14 4M15.200 8.500A7.200 7.200 0 0 1 2 12" />
              <path d="M15.500 1v4.500h-4.500zM.5 15v-4.500h4.500z" fill="#1c1c1c" stroke="none" />
            </svg>
          </ToolButton>
          <ToolButton>
            <EyeList className="size-4" />
          </ToolButton>
          <div className="-mx-[4px] h-4 w-px bg-[#c4c4c4]" />
          <ToolButton>
            <svg viewBox="0 0 16 16" className="size-4" fill="none" stroke="#1c1c1c" strokeWidth="1.200">
              <circle cx="3.300" cy="3.300" r="2.700" />
              <circle cx="12.700" cy="3.300" r="2.700" />
              <circle cx="3.300" cy="12.700" r="2.700" />
              <circle cx="12.700" cy="12.700" r="2.700" />
            </svg>
          </ToolButton>
        </div>
      </div>
      <div className="mt-[7px] flex h-[209px] overflow-hidden border border-[#6a6a6a]">
        <div className="w-[767px] shrink-0">
          <div className="flex h-[41px] border-b border-[#efefef]">
            <div className="flex w-[383px] items-center border-r border-[#efefef] pr-[16px] pb-[2px] pl-[13px]">
              <span className="tracking-[0.1px]">stop_name</span>
              <HeaderIcons />
            </div>
            <div className="flex flex-1 items-center pr-[16px] pb-[2px] pl-[13px]">
              <span className="tracking-[0.2px]">Time</span>
              <HeaderIcons />
            </div>
          </div>
          {SCHEDULE.map(([a, b]) => (
            <div key={a} className="flex h-[30px] border-b border-[#efefef] leading-[27px]">
              <div className="w-[383px] border-r border-[#efefef] pl-2 text-[13.5px] tracking-[0.3px]">{a}</div>
              <div className="pl-2 tracking-[0.05px]">{b}</div>
            </div>
          ))}
        </div>
        <div className="flex flex-1 flex-col items-center py-[7px]">
          <div className="h-0 w-0 border-x-4 border-b-4 border-x-transparent border-b-[#a3a3a3]" />
          <div className="mt-[6px] h-[26px] w-[13px] bg-[#a8a8a8]" />
          <div className="mt-auto h-0 w-0 border-x-4 border-t-4 border-x-transparent border-t-[#a3a3a3]" />
        </div>
      </div>
    </section>
  );
}

const FARES = [
  ["0-8 years of age", "Free", ""],
  ["8-14 years of age", "$1.75", ""],
  ["Student", "$2.25", "$60.00"],
  ["Senior", "$2.25", "$60.00"],
  ["Adult", "$2.75", "$70.00"],
];

function Fares() {
  return (
    <section className="w-[605px] text-[14px] text-[#555]">
      <div className="flex h-8 justify-between">
        <div className="flex h-8 w-[565px] border-b border-[#cfcfcf] pl-5">
          <div className="flex h-[31px] w-[161px] justify-center border-b-2 border-[#0b73e8] pt-[3px] leading-5 text-[#4a80da] tracking-[0.24px]">Lindsay Transit Fares</div>
        </div>
        <ToolButton>
          <EyeList className="size-4" />
        </ToolButton>
      </div>
      <div className="mt-3 h-[251px] border border-[#6a6a6a]">
        <div className="grid h-[41px] grid-cols-3 border-b border-[#efefef]">
          {["Cohort", "Single", "Monthly Pass"].map((h, i) => (
            <div key={h} className={`flex items-center pr-[16px] pb-[2px] pl-[12px] ${i < 2 ? "border-r border-[#efefef]" : ""}`}>
              <span className="tracking-[0.15px]">{h}</span>
              <HeaderIcons />
            </div>
          ))}
        </div>
        {FARES.map((row, r) => (
          <div key={r} className={`grid h-[30px] grid-cols-3 leading-[26px] ${r < 4 ? "border-b border-[#efefef]" : ""}`}>
            {row.map((c, i) => (
              <div key={i} className={`pl-2 tracking-[0.1px] ${i < 2 ? "border-r border-[#efefef]" : ""}`}>
                {c}
              </div>
            ))}
          </div>
        ))}
      </div>
    </section>
  );
}

export default function App() {
  return (
    <div className="flex h-[1033px] w-[1921px] flex-col overflow-hidden bg-white">
      <BrowserChrome />
      <div className="flex flex-1 flex-col border-l border-[#222] font-['Lato',sans-serif]">
        <Header />
        <main className="flex h-[818px]">
          <StopPanel />
          <div className="flex-1">
            <div className="flex">
              <MapPanel />
              <Legend />
            </div>
            <div className="flex gap-8 pt-[11px] pl-4">
              <Schedule />
              <Fares />
            </div>
          </div>
        </main>
        <footer className="flex h-[49px] bg-[#003c82]">
          <span className="mt-[14px] ml-[34px] text-[13px] leading-[19px] text-[#c7d3e3] tracking-[0.23px]">
            GEOM99 Web GIS Development | Fleming College | City of Kawartha Lakes Data
          </span>
          <button className="mt-[12.500px] mr-[27px] ml-auto flex h-[29px] w-[330px] justify-center rounded-full border border-[#b9c2cd] bg-[#e6f1fe] pt-[2px] text-[14px] leading-5 text-[#555] tracking-[0.28px]">
            Download Lindsay Transit Map
          </button>
        </footer>
        <div className="h-px bg-[#3a3a3a]" />
      </div>
    </div>
  );
}
